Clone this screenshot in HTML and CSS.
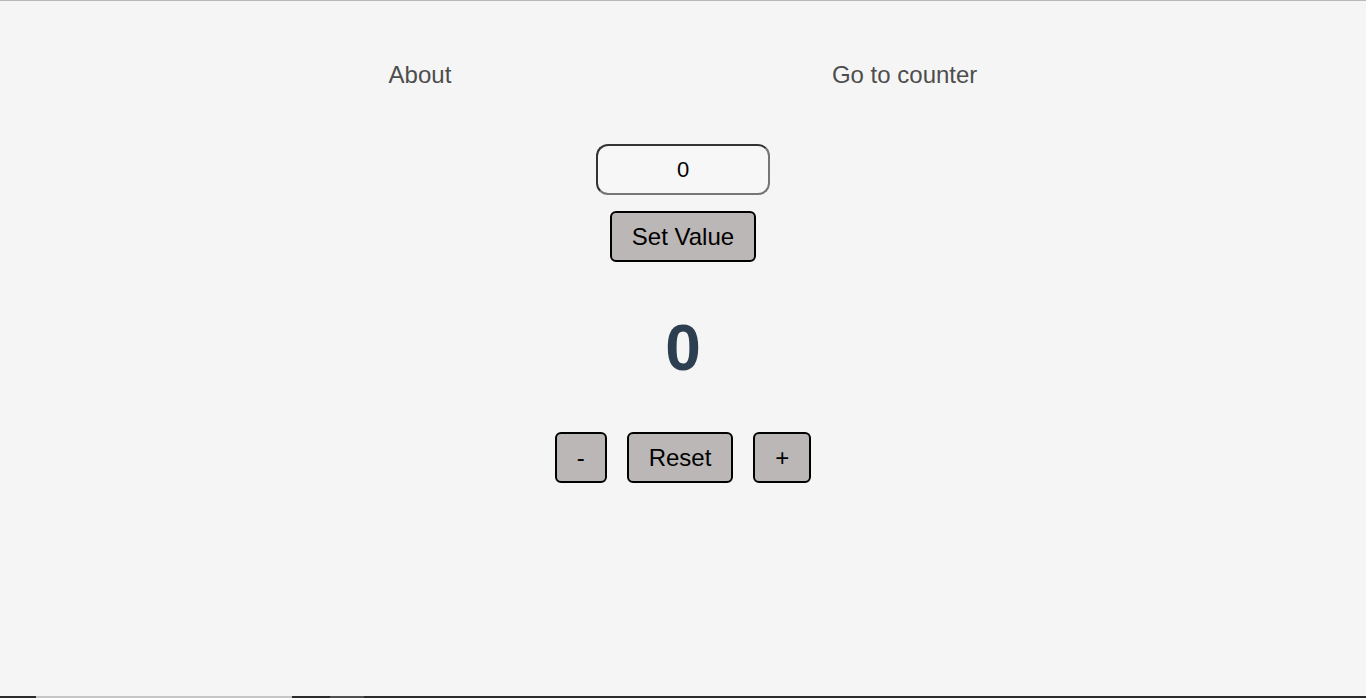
FILE: index.html
```html
<!DOCTYPE html>
<html lang="en">
<head>
<meta charset="utf-8">
<title>Counter</title>
<link rel="stylesheet" href="styles.css">
</head>
<body>
<nav class="nav">
  <a class="nav-link" href="#">About</a>
  <a class="nav-link" href="#">Go to counter</a>
</nav>
<main class="counter">
  <input class="value-input" type="text" value="0">
  <button class="btn btn-set">Set Value</button>
  <div class="count">0</div>
  <div class="controls">
    <button class="btn">-</button>
    <button class="btn">Reset</button>
    <button class="btn">+</button>
  </div>
</main>
<div class="taskbar">
  <span class="tb-seg tb-dark tb-a"></span>
  <span class="tb-seg tb-light tb-b"></span>
  <span class="tb-seg tb-dark tb-c"></span>
  <span class="tb-seg tb-mid tb-d"></span>
  <span class="tb-seg tb-dark tb-e"></span>
</div>
</body>
</html>
```
FILE: styles.css
```css
html {
  height: 100%;
  border-top: 1px solid #b9b9b9;
  box-sizing: border-box;
  background: #f5f5f5;
}
body {
  margin: 8px;
  height: calc(100% - 16px);
  font-family: "Liberation Sans", Arial, sans-serif;
  display: flex;
  flex-direction: column;
}
.nav {
  display: flex;
  justify-content: space-evenly;
  padding-top: 52px;
}
.nav-link {
  font-size: 24px;
  color: #4d4d4d;
  text-decoration: none;
}
.counter {
  display: flex;
  flex-direction: column;
  align-items: center;
  margin-top: 55px;
}
.value-input {
  box-sizing: border-box;
  width: 174px;
  height: 51px;
  border: 2px solid;
  border-color: #333 #767676 #767676 #333;
  border-radius: 12px;
  background: #f7f7f7;
  text-align: center;
  font-family: "Liberation Sans", Arial, sans-serif;
  font-size: 22px;
  color: #000;
  padding: 0;
  outline: none;
}
.btn {
  box-sizing: border-box;
  height: 51px;
  padding: 0 20px;
  border: 2px solid #000;
  border-radius: 6px;
  background: #bbb7b6;
  font-family: "Liberation Sans", Arial, sans-serif;
  font-size: 24px;
  color: #000;
}
.btn-set {
  margin-top: 16px;
}
.count {
  margin-top: 54px;
  font-size: 64px;
  font-weight: bold;
  color: #2c3e50;
  line-height: 64px;
}
.controls {
  display: flex;
  gap: 20px;
  margin-top: 52px;
}
.taskbar {
  position: fixed;
  left: 0;
  right: 0;
  bottom: 0;
  height: 2px;
  display: flex;
}
.tb-seg { height: 2px; }
.tb-dark { background: #2b2b2b; }
.tb-light { background: #c6c6c6; }
.tb-mid { background: #505050; }
.tb-a { width: 36px; }
.tb-b { width: 256px; }
.tb-c { width: 38px; }
.tb-d { width: 34px; }
.tb-e { flex: 1; }
```
